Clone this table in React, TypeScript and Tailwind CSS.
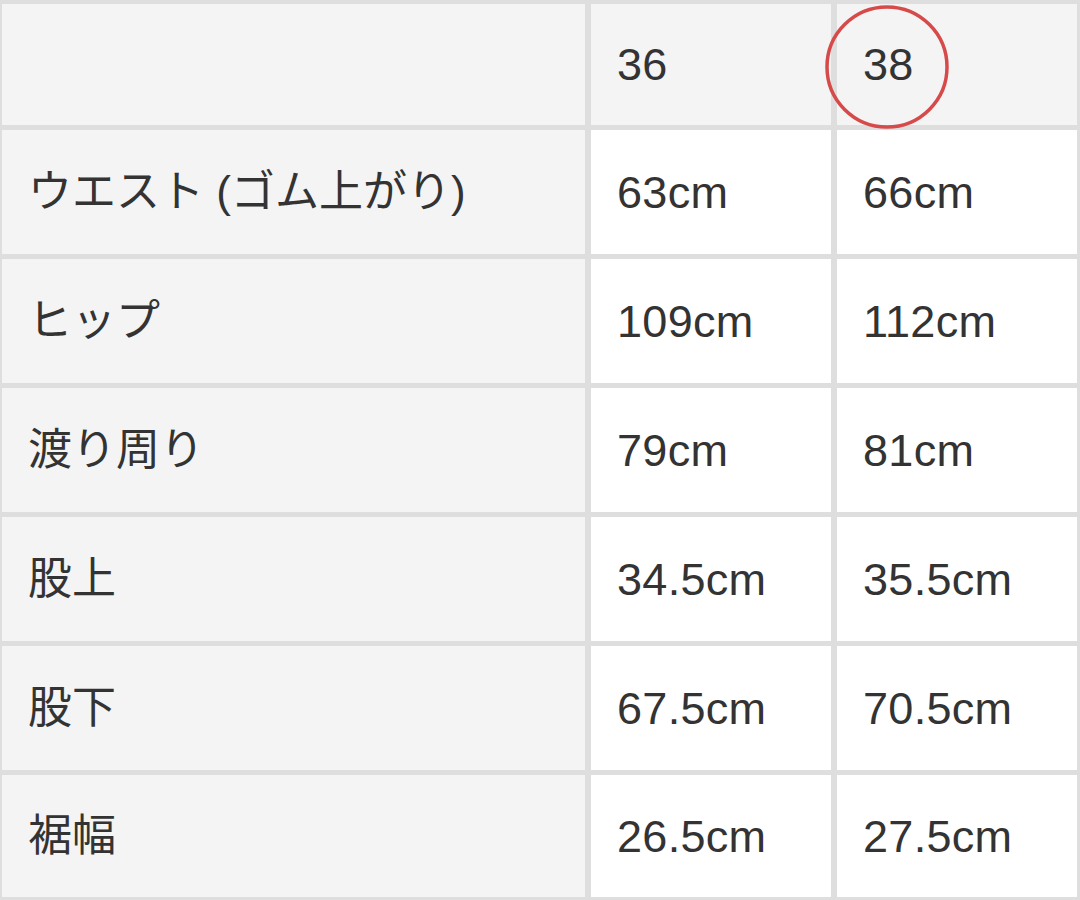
const rows: [string, string, string][] = [
  ["ウエスト (ゴム上がり)", "63cm", "66cm"],
  ["ヒップ", "109cm", "112cm"],
  ["渡り周り", "79cm", "81cm"],
  ["股上", "34.5cm", "35.5cm"],
  ["股下", "67.5cm", "70.5cm"],
  ["裾幅", "26.5cm", "27.5cm"],
];

function Cell({ text, tone, label }: { text: string; tone: "gray" | "white"; label?: boolean }) {
  return (
    <div
      className={`flex items-center pl-[26px] leading-none text-[#333333] ${
        label ? "text-[44px]" : "text-[45px] tracking-[0.3px]"
      } ${tone === "gray" ? "bg-[#f4f4f4]" : "bg-white"}`}
    >
      {text}
    </div>
  );
}

export default function App() {
  return (
    <div
      className="relative w-[1080px] h-[900px] overflow-hidden bg-[#dedede]"
      style={{ fontFamily: '"Liberation Sans", "Noto Sans CJK JP", sans-serif' }}
    >
      <div className="grid grid-cols-[583px_240px_240px] grid-rows-[121px_repeat(5,124px)_122px] gap-x-[6px] gap-y-[5px] pl-[2px] pt-[4px] pr-[3px] pb-[3px]">
        <Cell text="" tone="gray" />
        <Cell text="36" tone="gray" />
        <Cell text="38" tone="gray" />
        {rows.map(([label, a, b]) => (
          <div key={label} className="contents">
            <Cell text={label} tone="gray" label />
            <Cell text={a} tone="white" />
            <Cell text={b} tone="white" />
          </div>
        ))}
      </div>

      {/* red marker round the 38 column */}
      <svg className="absolute left-[824px] top-[4px]" width="126" height="126" viewBox="0 0 126 126">
        <circle cx="63" cy="63" r="60" fill="none" stroke="#d64a4a" strokeWidth="3.5" />
      </svg>
    </div>
  );
}
